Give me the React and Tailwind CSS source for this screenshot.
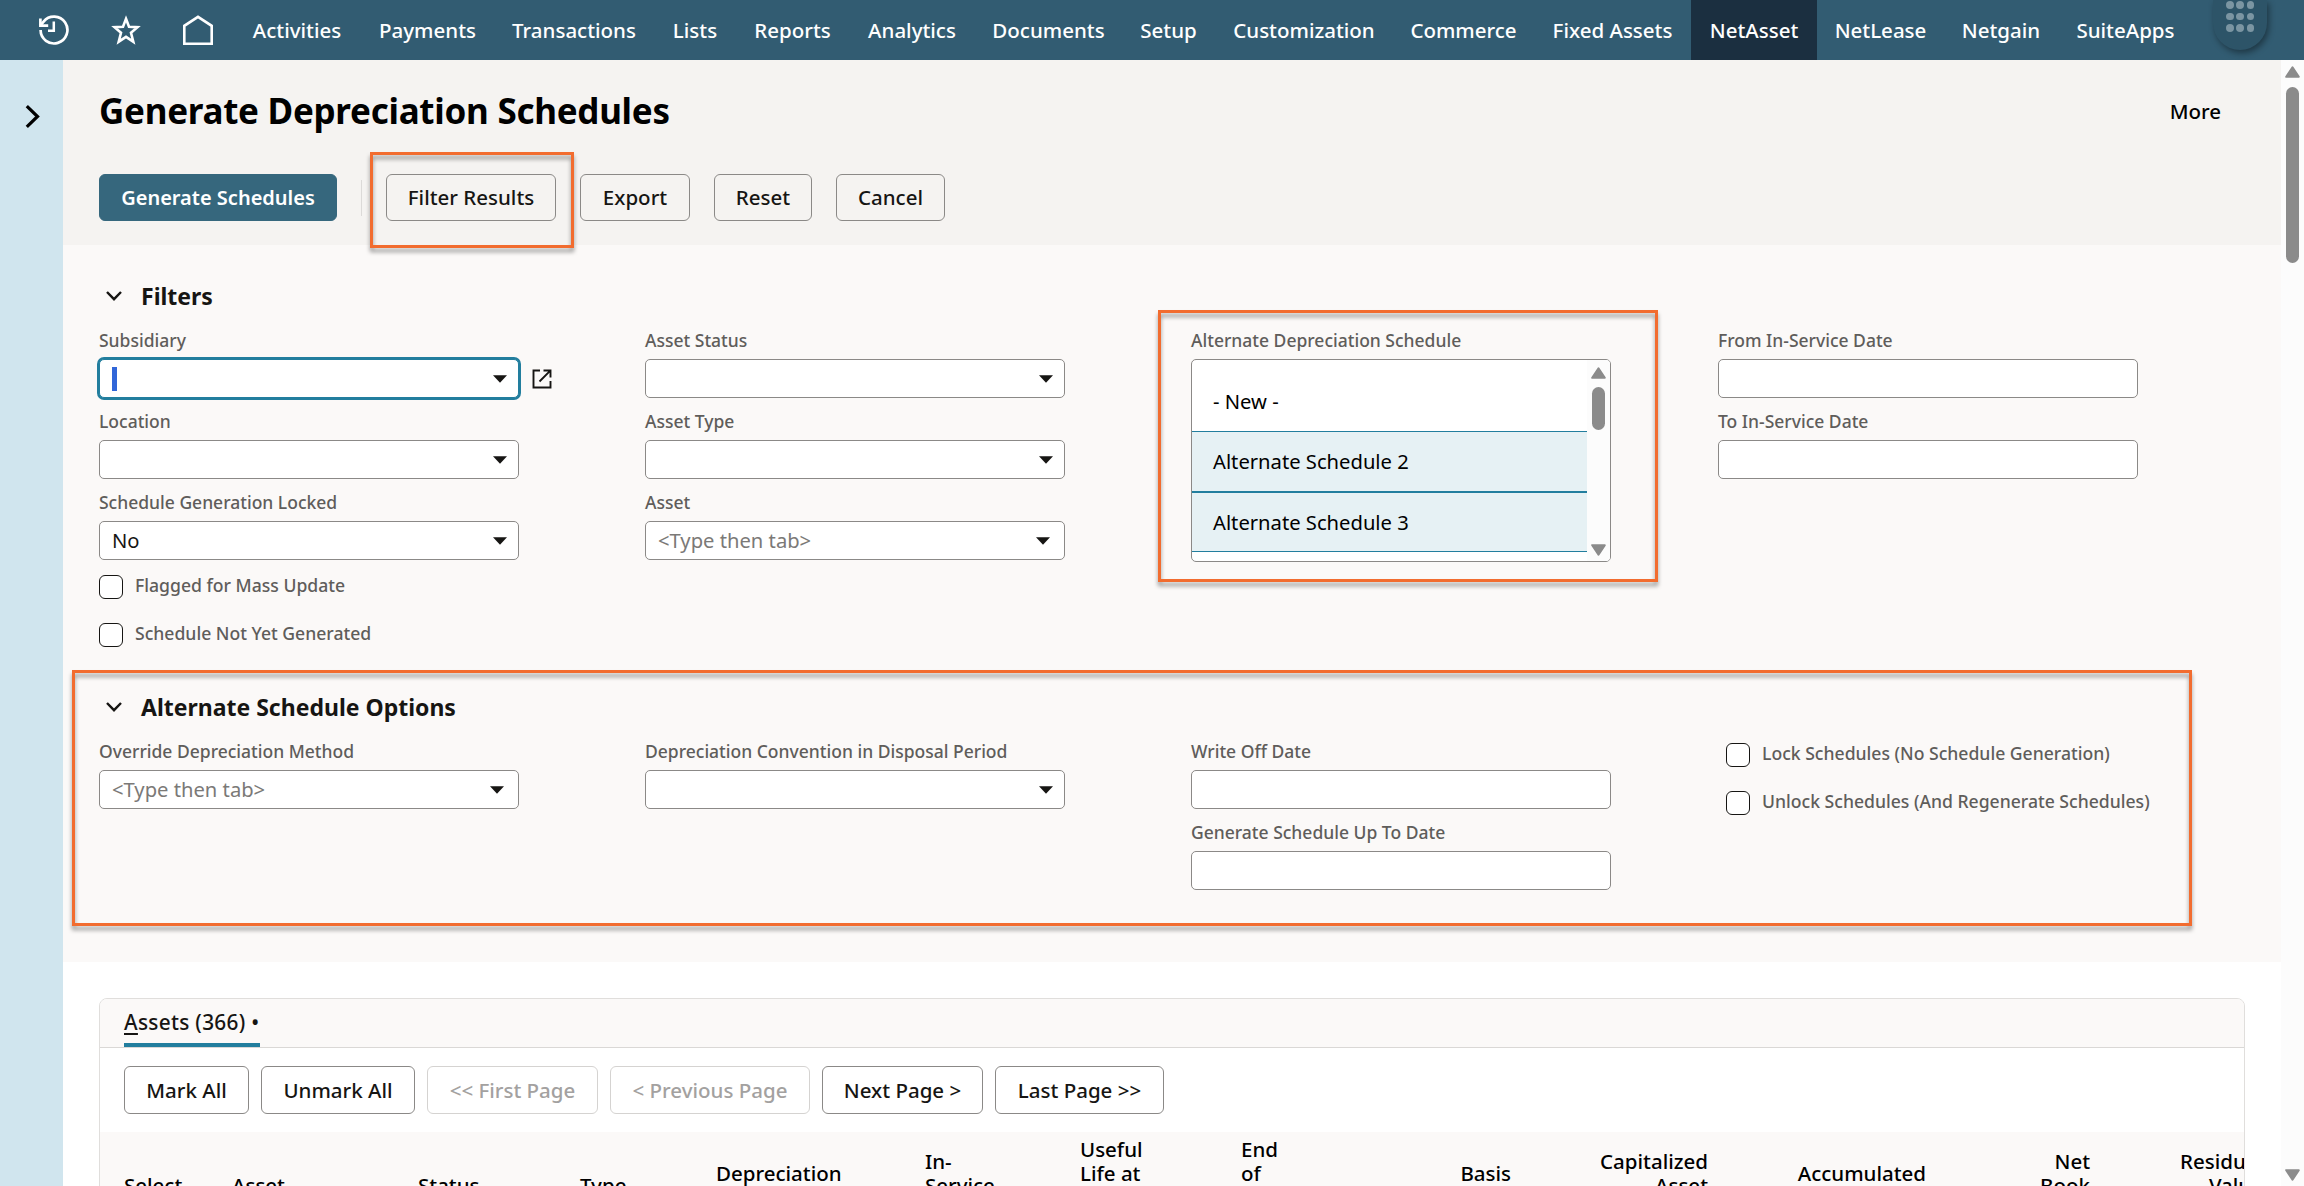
const navItems = [
    { label: "Activities", width: "w-[128px]" },
    { label: "Payments", width: "w-[133px]" },
    { label: "Transactions", width: "w-[160px]" },
    { label: "Lists", width: "w-[82px]" },
    { label: "Reports", width: "w-[113px]" },
    { label: "Analytics", width: "w-[126px]" },
    { label: "Documents", width: "w-[147px]" },
    { label: "Setup", width: "w-[93px]" },
    { label: "Customization", width: "w-[178px]" },
    { label: "Commerce", width: "w-[141px]" },
    { label: "Fixed Assets", width: "w-[157px]" },
    { label: "NetAsset", width: "w-[126px]", active: true },
    { label: "NetLease", width: "w-[127px]" },
    { label: "Netgain", width: "w-[114px]" },
    { label: "SuiteApps", width: "w-[135px]" },
];

const pageButtons = [
    { label: "Mark All", width: "w-[125px]" },
    { label: "Unmark All", width: "w-[154px]" },
    { label: "<< First Page", width: "w-[171px]", disabled: true },
    { label: "< Previous Page", width: "w-[200px]", disabled: true },
    { label: "Next Page >", width: "w-[161px]" },
    { label: "Last Page >>", width: "w-[169px]" },
];

const columns = [
    { lines: ["Select"], width: "w-[108px]" },
    { lines: ["Asset"], width: "w-[186px]" },
    { lines: ["Status"], width: "w-[162px]" },
    { lines: ["Type"], width: "w-[136px]" },
    { lines: ["Depreciation", "Method"], width: "w-[209px]" },
    { lines: ["In-", "Service", "Date"], width: "w-[155px]" },
    { lines: ["Useful", "Life at", "Start", "Date"], width: "w-[161px]" },
    { lines: ["End", "of", "Useful", "Life"], width: "w-[120px]" },
    { lines: ["Basis", "Total"], width: "w-[150px]", right: true },
    { lines: ["Capitalized", "Asset", "Cost"], width: "w-[197px]", right: true },
    { lines: ["Accumulated", "Total"], width: "w-[218px]", right: true },
    { lines: ["Net", "Book", "Value"], width: "w-[164px]", right: true },
    { lines: ["Residual", "Value", "Total"], width: "w-[173px]", right: true },
];

function HistoryIcon() {
    return (
        <svg viewBox="0 0 30 30" className="size-[30px]" fill="none" stroke="white" strokeWidth="2.7">
            <path d="M1.6 15A13.4 13.4 0 1 0 4.6 6.6L1.4 10.4" />
            <path d="M1.4 3.5V10.7H9.2" />
            <path d="M14.8 6.5V15.8H9" strokeWidth="2.5" />
        </svg>
    );
}

function StarIcon() {
    return (
        <svg viewBox="0 0 30 30" className="size-[30px]" fill="none" stroke="white" strokeWidth="2.6">
            <path d="M15 3.8L18 11.7L26.5 12.2L20 17.7L22.3 26.7L15 21.8L7.7 26.7L10 17.7L3.5 12.2L12 11.7Z" />
        </svg>
    );
}

function HomeIcon() {
    return (
        <svg viewBox="0 0 30 30" className="size-[30px]" fill="none" stroke="white" strokeWidth="2.6">
            <path d="M1.3 28.7V10.8L15 1.9L28.7 10.8V28.7Z" />
        </svg>
    );
}

function PopupIcon() {
    return (
        <svg viewBox="0 0 20 20" className="size-5" fill="none" stroke="#161513" strokeWidth="1.9">
            <path d="M8 1.5H1.5V18.5H18.5V12" />
            <path d="M11.5 1.5H18.5V8.5M18.3 1.7L7.5 12.5" />
        </svg>
    );
}

function Triangle({ down }) {
    return (
        <svg viewBox="0 0 15 12" className="h-3 w-[15px]" fill="#8b8b8b" stroke="#8b8b8b" strokeWidth="2" strokeLinejoin="round">
            <path d={down ? "M1.2 1.2H13.8L7.5 10.6Z" : "M1.2 10.8H13.8L7.5 1.4Z"} />
        </svg>
    );
}

// orange callout frame drawn over the page
function Callout({ className }) {
    return (
        <div className={`pointer-events-none absolute border-[3px] border-[#f26c2f] drop-shadow-[0_4px_2px_rgba(0,0,0,0.4)] ${className}`} />
    );
}

function FieldLabel({ children }) {
    return (
        <div className="mb-[7px] h-[23px] whitespace-nowrap text-[17.5px] leading-[22px] font-medium text-[#5f5d5b]">{children}</div>
    );
}

function Field({ label, value, placeholder, select, focused, popup }) {
    return (
        <div className="w-[420px]">
            <FieldLabel>{label}</FieldLabel>
            <div className="flex h-[39px] items-center">
                <div
                    className={`flex h-full w-[420px] shrink-0 items-center justify-between rounded-[5px] border bg-white pl-3 ${placeholder ? "pr-3.5" : "pr-[11px]"} ${focused ? "border-[#227e9e] ring-2 ring-[#227e9e]" : "border-[#8b8987]"}`}
                >
                    {focused && <span className="h-6 w-[5px] bg-[#3166d8]" />}
                    {placeholder && <span className="text-[20.2px] text-[#7b7977]">{placeholder}</span>}
                    {value && <span className="text-[20.2px] text-[#161513]">{value}</span>}
                    {select && (
                        <svg viewBox="0 0 14 8" className="ml-auto h-2 w-3.5" fill="#161513">
                            <path d="M0 0.3H14L7 7.7Z" />
                        </svg>
                    )}
                </div>
                {popup && <div className="ml-[13px]"><PopupIcon /></div>}
            </div>
        </div>
    );
}

function Checkbox({ label }) {
    return (
        <div className="flex h-6 items-center">
            <span className="size-6 shrink-0 rounded-[6px] border-[1.5px] border-[#161513] bg-white" />
            <span className="ml-3 pb-1 whitespace-nowrap text-[17.6px] leading-6 font-medium text-[#5f5d5b]">{label}</span>
        </div>
    );
}

function SectionTitle({ children }) {
    return (
        <div className="mb-[17px] flex h-8 items-center">
            <svg viewBox="0 0 16 10" className="mr-[19px] ml-[7px] h-2.5 w-4" fill="none" stroke="#161513" strokeWidth="2.4">
                <path d="M1 1L8 8.2L15 1" />
            </svg>
            <h2 className="text-[23px] leading-8 font-bold text-[#161513]">{children}</h2>
        </div>
    );
}

function Button({ children, className = "" }) {
    return (
        <button className={`flex items-center justify-center rounded-[6px] border whitespace-nowrap ${className}`}>
            {children}
        </button>
    );
}

function ScheduleList() {
    return (
        <div className="w-[420px]">
            <FieldLabel>Alternate Depreciation Schedule</FieldLabel>
            <div className="flex h-[203px] overflow-hidden rounded-[5px] border border-[#8b8987] bg-white text-[20.2px] text-black">
                <div className="flex-1 pt-[11px]">
                    <div className="flex h-[60px] items-center pl-[21px]">- New -</div>
                    <div className="flex h-[61px] items-center border-y border-[#227e9e] bg-[#e6f1f4] pl-[21px]">Alternate Schedule 2</div>
                    <div className="flex h-[60px] items-center border-y border-[#227e9e] bg-[#e6f1f4] pl-[21px]">Alternate Schedule 3</div>
                </div>
                <div className="flex w-[23px] flex-col items-center bg-[#fcfcfc] pt-[7px] pb-[5px]">
                    <Triangle />
                    <div className="mt-2 h-[43px] w-[13px] rounded-full bg-[#8b8b8b]" />
                    <div className="mt-auto"><Triangle down /></div>
                </div>
            </div>
        </div>
    );
}

function TopNav() {
    return (
        <header className="relative flex h-[60px] shrink-0 items-center bg-[#325c72] pl-[39px] text-white">
            <div className="flex w-[194px] gap-[42px]">
                <HistoryIcon />
                <StarIcon />
                <HomeIcon />
            </div>
            {navItems.map((item) => (
                <a
                    key={item.label}
                    className={`flex h-full shrink-0 items-center justify-center whitespace-nowrap text-[20.5px] font-medium ${item.width} ${item.active ? "bg-[#1b2f40]" : ""}`}
                >
                    {item.label}
                </a>
            ))}
            <div className="absolute top-0 right-[37px] grid h-[50px] w-[54px] grid-cols-3 content-start justify-center gap-x-[3px] gap-y-1 rounded-b-full bg-[#2d5468] px-[13px] pt-px shadow-[2px_3px_6px_rgba(0,0,0,0.4)]">
                {Array.from({ length: 9 }, (_, i) => (
                    <span key={i} className="size-[7.5px] rounded-full bg-[#7b95a2]" />
                ))}
            </div>
        </header>
    );
}

function PageHeader() {
    return (
        <div className="h-[185px] shrink-0 bg-[#f5f3f1] pt-[31px] pl-9">
            <div className="flex h-10 items-center justify-between pr-[60px]">
                <h1 className="text-[35px] leading-10 font-bold tracking-[-0.27px] text-black">Generate Depreciation Schedules</h1>
                <span className="pt-px text-[20.5px] font-medium text-black">More</span>
            </div>
            <div className="relative mt-[43px] flex h-[47px] items-center text-[20.5px] font-medium text-[#161513]">
                <Button className="h-full w-[238px] border-[#36677d] bg-[#36677d] text-[20px] font-semibold text-white">Generate Schedules</Button>
                <span className="mx-6 h-9 w-px bg-[#dcdad8]" />
                <Button className="mr-6 h-full w-[170px] border-[#8b8987]">Filter Results</Button>
                <Button className="mr-6 h-full w-[110px] border-[#8b8987]">Export</Button>
                <Button className="mr-6 h-full w-[98px] border-[#8b8987]">Reset</Button>
                <Button className="h-full w-[109px] border-[#8b8987]">Cancel</Button>
                <Callout className="-top-[22px] left-[271px] z-10 h-24 w-[204px]" />
            </div>
        </div>
    );
}

function Filters() {
    return (
        <section className="relative h-[446px] shrink-0 pt-[35px] pl-9">
            <SectionTitle>Filters</SectionTitle>
            <div className="grid grid-cols-[546px_546px_527px_420px]">
                <div className="flex flex-col gap-3">
                    <Field label="Subsidiary" select focused popup />
                    <Field label="Location" select />
                    <Field label="Schedule Generation Locked" value="No" select />
                    <div className="mt-[3px] flex flex-col gap-6">
                        <Checkbox label="Flagged for Mass Update" />
                        <Checkbox label="Schedule Not Yet Generated" />
                    </div>
                </div>
                <div className="flex flex-col gap-3">
                    <Field label="Asset Status" select />
                    <Field label="Asset Type" select />
                    <Field label="Asset" placeholder="<Type then tab>" select />
                </div>
                <ScheduleList />
                <div className="flex flex-col gap-3">
                    <Field label="From In-Service Date" />
                    <Field label="To In-Service Date" />
                </div>
            </div>
            <Callout className="top-[65px] left-[1095px] h-[272px] w-[500px]" />
        </section>
    );
}

function ScheduleOptions() {
    return (
        <section className="relative h-[271px] shrink-0 pl-9">
            <SectionTitle>Alternate Schedule Options</SectionTitle>
            <div className="grid grid-cols-[546px_546px_527px_420px]">
                <Field label="Override Depreciation Method" placeholder="<Type then tab>" select />
                <Field label="Depreciation Convention in Disposal Period" select />
                <div className="flex flex-col gap-3">
                    <Field label="Write Off Date" />
                    <Field label="Generate Schedule Up To Date" />
                </div>
                <div className="flex flex-col gap-6 pt-[3px] pl-2">
                    <Checkbox label="Lock Schedules (No Schedule Generation)" />
                    <Checkbox label="Unlock Schedules (And Regenerate Schedules)" />
                </div>
            </div>
            <Callout className="-top-[21px] left-[9px] h-64 w-[2120px]" />
        </section>
    );
}

function AssetsPanel() {
    return (
        <section className="min-h-0 flex-1 bg-white px-9 pt-9">
            <div className="h-[300px] overflow-hidden rounded-t-lg border border-[#e0dedc]">
                <div className="flex h-[49px] border-b border-[#dad8d6] bg-[#fbf9f8] pl-6">
                    <div className="h-full w-[136px] border-b-4 border-[#227e9e] pt-2 text-[20.8px] leading-[30px] font-medium tracking-[0.3px] whitespace-nowrap text-[#161513]">
                        <span className="underline decoration-2 underline-offset-[3px]">A</span>ssets (366) •
                    </div>
                </div>
                <div className="flex gap-3 py-[18px] pl-6 text-[20.5px] font-medium">
                    {pageButtons.map((b) => (
                        <Button
                            key={b.label}
                            className={`h-12 ${b.width} ${b.disabled ? "border-[#d5d3d1] text-[#a3a1a0]" : "border-[#8b8987] text-[#161513]"}`}
                        >
                            {b.label}
                        </Button>
                    ))}
                </div>
                <div className="flex h-[106px] items-center bg-[#fbf9f8] pl-6 text-[20.5px] leading-6 font-medium text-black">
                    {columns.map((c) => (
                        <div key={c.lines[0]} className={`shrink-0 ${c.width} ${c.right ? "text-right" : ""}`}>
                            {c.lines.map((line) => <div key={line}>{line}</div>)}
                        </div>
                    ))}
                </div>
            </div>
        </section>
    );
}

export default function App() {
    return (
        <div className="flex h-screen w-full flex-col overflow-hidden font-['Noto_Sans','Open_Sans',sans-serif]">
            <TopNav />
            <div className="flex min-h-0 flex-1">
                <aside className="w-[63px] shrink-0 bg-[#d0e5ee] pt-[45px] pl-[25px]">
                    <svg viewBox="0 0 15 23" className="h-[23px] w-[15px]" fill="none" stroke="#000" strokeWidth="3.2">
                        <path d="M1.8 1.2L12.5 11.5L1.8 21.8" />
                    </svg>
                </aside>
                <main className="flex min-w-0 flex-1 flex-col overflow-hidden bg-[#fbf9f8]">
                    <PageHeader />
                    <Filters />
                    <ScheduleOptions />
                    <AssetsPanel />
                </main>
                <div className="flex w-[23px] shrink-0 flex-col items-center bg-[#fcfcfc] pt-1.5 pb-[5px]">
                    <Triangle />
                    <div className="mt-[9px] h-44 w-[13px] rounded-full bg-[#8b8b8b]" />
                    <div className="mt-auto"><Triangle down /></div>
                </div>
            </div>
        </div>
    );
}
